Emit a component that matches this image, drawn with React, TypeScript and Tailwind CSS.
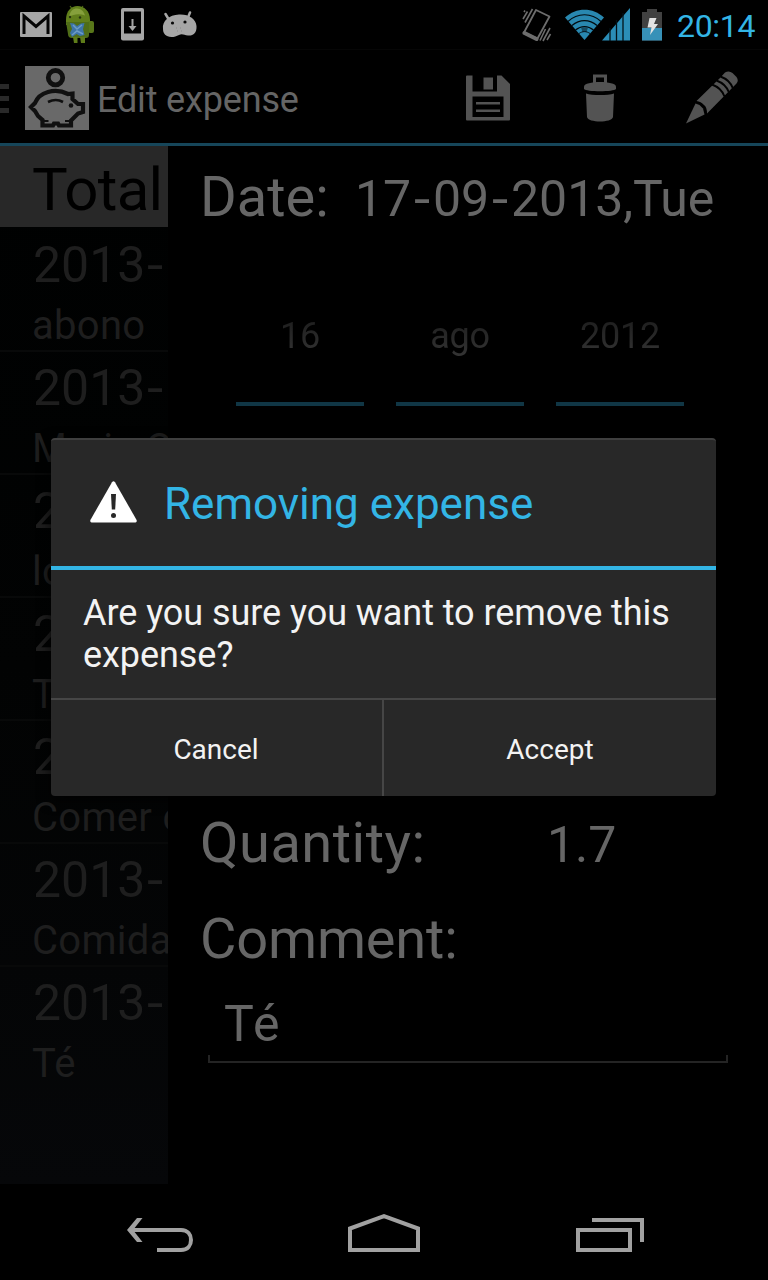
import React from "react";

const rows = [
  { year: "2013", note: "abono" },
  { year: "2013", note: "Maria C" },
  { year: "2013", note: "loteria" },
  { year: "2013", note: "Tabaco" },
  { year: "2013", note: "Comer con" },
  { year: "2013", note: "Comida" },
  { year: "2013", note: "Té" },
];

const pickers = ["16", "ago", "2012"];

function GmailIcon() {
  return (
    <svg className="ml-[20px] h-[25px] w-[32px] shrink-0" viewBox="0 0 32 25">
      <rect width="32" height="25" rx="1" fill="#a6a6a6" />
      <path d="M4 22V4L16 14.500L28 4V22" fill="none" stroke="#050505" strokeWidth="3" />
    </svg>
  );
}

function DroidIcon() {
  return (
    <svg className="ml-[13px] h-[39px] w-[30px] shrink-0" viewBox="0 0 30 39">
      <path d="M5 1l3 4M18 1l-3 4" stroke="#4f6a18" strokeWidth="1.2" />
      <path d="M1 15C1 6 6 1 12.500 1S25 6 25 15v5H1z" fill="#617f1b" />
      <path d="M4 12C5 6 8 3.500 12 3.500s7 3 8 7c-5-2-11-2-16 1.500z" fill="#86a03c" />
      <rect x="23" y="16" width="6" height="12" rx="2" fill="#587619" />
      <path d="M1 17h23v13q0 3-3 3H7q-4 0-4-4z" fill="#4f6d18" />
      <path d="M8 32h4.500v6H9zM15 32h5v6h-4z" fill="#5e7c19" />
      <circle cx="5" cy="12" r="1.200" fill="#25340f" />
      <circle cx="15" cy="12.500" r="1.200" fill="#25340f" />
      <path d="M5 18l4 .5 3 2.500 4-2.500 3.500-.5-1.500 6 1.500 6-4.500 1-3.500-2-4.500 3-2-4 2-4z" fill="#3d74a8" />
      <path d="M8 20l4 4 5-4M7 30l5-4 6 3" stroke="#6c9cc6" strokeWidth="1.500" fill="none" />
    </svg>
  );
}

function DownloadIcon() {
  return (
    <svg className="ml-[26px] h-[33px] w-[24px] shrink-0" viewBox="0 0 24 33">
      <rect x="0" y="0" width="23" height="32.500" rx="2" fill="#a6a6a6" />
      <rect x="3" y="3.500" width="17" height="22" fill="#020202" />
      <path d="M11.500 11v9" stroke="#a6a6a6" strokeWidth="2" />
      <path d="M7.500 18h8l-4 5z" fill="#a6a6a6" />
    </svg>
  );
}

function DroidHeadIcon() {
  return (
    <svg className="mb-[1px] ml-[17px] h-[27px] w-[36px] shrink-0" viewBox="0 0 36 27">
      <path
        d="M3.500 3l3 5M28 1.500l-2 5"
        stroke="#a6a6a6"
        strokeWidth="2.500"
        strokeLinecap="round"
      />
      <path
        d="M1 18C0 10 7 4 17 3.500S34 8 34.500 15C35 22 31 25 26 24.500 22 24 20 22 17 24 13 26 9 27 5 25 2 23.500 1 21 1 18z"
        fill="#a6a6a6"
      />
      <circle cx="10.500" cy="12" r="1.600" fill="#080808" />
      <circle cx="23" cy="11" r="1.600" fill="#080808" />
      <path d="M14 17h1M18 17h1M15 20h1M19 20h1" stroke="#8a8a8a" />
    </svg>
  );
}

function VibrateIcon() {
  return (
    <svg className="h-[36px] w-[30px] shrink-0" viewBox="0 0 30 36">
      <g fill="none" stroke="#6d6d6d">
        <path d="M14 3L27.500 9.500 15.500 31.500 2 25.500z" strokeWidth="1.800" strokeLinejoin="round" />
        <path d="M2.500 26L14.500 32" strokeWidth="4" strokeLinecap="round" />
        <path
          d="M10.500 2L3 15.500M5.500 4.500L1 12M3 3.500L2 5M28 21l-7 13M23.500 22l-5.500 11.500M28.500 27l-3.500 6"
          strokeWidth="1.600"
        />
      </g>
    </svg>
  );
}

function WifiIcon() {
  return (
    <svg className="ml-[13px] h-[32px] w-[40px] shrink-0" viewBox="0 0 40 32">
      <path d="M0 8.500C11-2 28-2 39 8.500L19.500 31z" fill="#2988b0" />
      <g fill="none" stroke="#020a0e" strokeWidth="1.200">
        <path d="M3 12.500c9.500-9 23.500-9 33 0" />
        <path d="M7 16.500c7.500-6.500 17.500-6.500 25 0" />
        <path d="M10.500 21c5.500-4.500 12.500-4.500 18 0" />
      </g>
      <path d="M16 18.500h7l-1.500 4.500h-4z" fill="#164c63" />
      <path d="M14 24.500c3.500-2.500 7.500-2.500 11 0" fill="none" stroke="#041017" />
    </svg>
  );
}

function SignalIcon() {
  return (
    <svg className="-ml-[3px] h-[33px] w-[29px] shrink-0" viewBox="0 0 29 33">
      <path d="M0 32.500L28 0V32.500z" fill="#2b8db7" />
      <path d="M8 20v13M14.500 12v21M21 5v28" stroke="#031118" strokeWidth="1.300" />
    </svg>
  );
}

function BatteryIcon() {
  return (
    <svg className="ml-[11px] h-[32px] w-[21px] shrink-0" viewBox="0 0 21 32">
      <path d="M5 0h10v3h5v28.500H0V3h5z" fill="#414141" />
      <path d="M0 19h20v12.500H0z" fill="#3791b8" />
      <path d="M7.500 9h7l-2.500 6h4L8 26l1.500-7.500H5.500z" fill="#e3e3e3" />
    </svg>
  );
}

function StatusBar() {
  return (
    <header className="flex h-[50px] shrink-0 items-center border-b border-[#060606] bg-black">
      <GmailIcon />
      <DroidIcon />
      <DownloadIcon />
      <DroidHeadIcon />
      <div className="ml-auto flex items-center pr-[11px]">
        <VibrateIcon />
        <WifiIcon />
        <SignalIcon />
        <BatteryIcon />
        <span className="ml-[14px] w-[80px] pt-[2px] text-[32px] leading-[48px] tracking-[-0.3px] whitespace-nowrap text-[#33b5e5]">
          20:14
        </span>
      </div>
    </header>
  );
}

function PiggyIcon() {
  return (
    <svg className="ml-[16px] size-[64px] shrink-0" viewBox="0 0 64 64">
      <rect width="64" height="64" fill="#696969" />
      <g fill="none" stroke="#101010">
        <circle cx="30.500" cy="11.700" r="7.200" strokeWidth="4.800" />
        <path
          d="M6 41L10 37C12 32 16 28 23 26 30 24 37 25 43 28L47.500 27.500V33L53 38H58V46L53 47.500 46 54.500V59.500H34L33 57.500H29L28 59.500H17.500V54L13 50 10 45z"
          strokeWidth="4.200"
        />
        <path d="M23 36q8-4 15 0" strokeWidth="2.600" />
        <path d="M17.500 55l6 0M40 55h6" strokeWidth="2" />
      </g>
      <circle cx="46" cy="39.500" r="2.300" fill="#101010" />
    </svg>
  );
}

function SaveIcon() {
  return (
    <svg className="h-[46px] w-[45px] shrink-0" viewBox="0 0 45 46">
      <path
        fill="#535353"
        fillRule="evenodd"
        d="M1 .5H6.500V16.500H31V.5H35.500L44 9V44.500Q44 45.500 43 45.500H1Q0 45.500 0 44.500V1.500Q0 .5 1 .5zM6.500 21.500V42H37.500V21.500z"
      />
      <path d="M17.500 2.500h9.500v12h-9.500zM10 27h24v2.600H10zM10 34.500h24v2.600H10z" fill="#535353" />
    </svg>
  );
}

function TrashIcon() {
  return (
    <svg className="h-[48px] w-[32px] shrink-0" viewBox="0 0 32 48">
      <path d="M10.500 9V2h11v7" fill="none" stroke="#535353" strokeWidth="3" />
      <path d="M0 12.500C0 6.500 32 6.500 32 12.500V15C30 18 2 18 0 15z" fill="#535353" />
      <path d="M2 19.500C8 21.500 24 21.500 30 19.500L29 43C28 49 4 49 3 43z" fill="#535353" />
    </svg>
  );
}

function PencilIcon() {
  return (
    <svg className="h-[53px] w-[53px] shrink-0" viewBox="0 0 53 53">
      <path
        d="M39 1.500Q43-.8 46.500 2L50.500 6Q53 9.500 50.500 12.500L21 42.500Q21 36 18 34 15 30.500 10.500 30L34 7z"
        fill="#535353"
      />
      <path d="M9.500 32.500L13.500 34 17 37.500 18.500 43.500 0 52.500z" fill="#535353" />
      <g stroke="#020202" strokeWidth="1.900" fill="none">
        <path d="M34.500 5.500q9.500 3.500 12.500 12" />
        <path d="M30.500 9.500q9.500 3.500 12.500 12" />
        <path d="M26 13.500q9.500 3.500 12.500 12" />
      </g>
    </svg>
  );
}

function ActionBar() {
  return (
    <div className="flex h-[96px] shrink-0 items-center border-b-[3px] border-[#16465a] bg-black pt-[2px]">
      <div className="flex w-[9px] flex-col gap-[7px] pt-[2px]">
        <i className="h-[5px] bg-[#292929]" />
        <i className="h-[5px] bg-[#292929]" />
        <i className="h-[5px] bg-[#292929]" />
      </div>
      <PiggyIcon />
      <h1 className="ml-[8px] w-[360px] pt-[4px] text-[36px] leading-[42px] tracking-[-0.16px] whitespace-nowrap text-[#656565]">
        Edit expense
      </h1>
      <div className="ml-[9px] flex flex-1 items-center">
        <SaveIcon />
        <div className="ml-[73px] flex">
          <TrashIcon />
        </div>
        <div className="ml-[70px] flex">
          <PencilIcon />
        </div>
      </div>
    </div>
  );
}

function Sidebar() {
  return (
    <aside className="w-[168px] shrink-0 overflow-hidden bg-linear-to-b from-[#000101] via-[#020303] to-[#060709]">
      <div className="mb-[2px] h-[81px] overflow-hidden bg-[#282828] pt-[3px] pl-[32px] text-[60px] leading-[81px] tracking-[-0.7px] whitespace-nowrap text-black">
        Total
      </div>
      {rows.map((row, i) => (
        <div
          key={i}
          className={
            "h-[123px] pt-[7px] pl-[33px] whitespace-nowrap text-[#1e1e1e] " +
            (i < rows.length - 1 ? "border-b-2 border-[#080909]" : "")
          }
        >
          <div className="text-[50px] leading-[59px]">
            {row.year}
            <span className="inline-block w-[20px] scale-x-[1.17] text-center">-</span>
          </div>
          <div className="-ml-[1px] pt-[6px] text-[40px] leading-[50px] tracking-[0.3px]">
            {row.note}
          </div>
        </div>
      ))}
    </aside>
  );
}

function DateDash() {
  return <span className="inline-block w-[22px] scale-x-[1.17] text-center">-</span>;
}

function ExpenseForm() {
  return (
    <main className="flex flex-1 flex-col bg-black text-[#666666]">
      <div className="flex h-[104px] items-baseline pt-[18px] pl-[32px] whitespace-nowrap">
        <span className="w-[155px] text-[56px] leading-[66px]">Date:</span>
        <span className="text-[50px] leading-[66px] tracking-[-0.08px]">
          17
          <DateDash />
          09
          <DateDash />
          2013,Tue
        </span>
      </div>
      <div className="flex gap-[32px] pl-[68px]">
        {pickers.map((value) => (
          <div
            key={value}
            className="h-[156px] w-[128px] border-b-4 border-[#103645] pt-[65px] text-center text-[36px] leading-[42px] tracking-[-0.2px]"
          >
            <span className="bg-linear-to-b from-[#1c1c1c] to-[#343434] bg-clip-text text-transparent">
              {value}
            </span>
          </div>
        ))}
      </div>
      <div className="mt-[404px] flex h-[66px] items-baseline pl-[32px] whitespace-nowrap">
        <span className="w-[347px] text-[56px] leading-[66px] tracking-[0.5px]">Quantity:</span>
        <span className="text-[50px] leading-[66px]">1.7</span>
      </div>
      <div className="mt-[30px] pl-[32px] text-[56px] leading-[66px] tracking-[-0.2px]">
        Comment:
      </div>
      <div className="mt-[22px] ml-[40px] w-[520px]">
        <div className="h-[61px] pl-[16px] text-[50px] leading-[60px] tracking-[1.5px]">Té</div>
        <div className="h-[8px] border-x-2 border-b-2 border-[#242424]" />
      </div>
    </main>
  );
}

function NavBar() {
  return (
    <nav className="flex h-[96px] shrink-0 bg-black pt-[30px] pl-[127px]">
      <svg className="h-[40px] w-[67px]" viewBox="0 0 67 40">
        <path d="M4 16H54C61 16 64 21 64 26S61 36 54 36H30" fill="none" stroke="#a1a1a1" strokeWidth="4" />
        <path d="M10 4H15.500L6 16 15.500 28H10L0 16z" fill="#a1a1a1" />
      </svg>
      <svg className="ml-[154px] h-[40px] w-[72px]" viewBox="0 0 72 40">
        <path d="M2 36V14.500L36 2.200L70 14.500V36z" fill="none" stroke="#a1a1a1" strokeWidth="4" />
      </svg>
      <svg className="ml-[156px] h-[40px] w-[68px]" viewBox="0 0 68 40">
        <g fill="none" stroke="#a1a1a1" strokeWidth="4">
          <path d="M2 16H54V36H2z" />
          <path d="M16 6H66V28" />
        </g>
      </svg>
    </nav>
  );
}

function Dialog() {
  return (
    <div
      role="alertdialog"
      className="absolute top-[438px] left-[51px] flex h-[358px] w-[665px] flex-col overflow-hidden rounded-[4px] border-t-2 border-[#3f3f3f] bg-[#282828] shadow-[0_4px_14px_rgba(0,0,0,0.8)]"
    >
      <div className="flex h-[130px] shrink-0 items-center border-b-4 border-[#33b5e5]">
        <svg className="mb-[2px] ml-[39px] h-[42px] w-[47px]" viewBox="0 0 47 42">
          <path
            d="M22 1.200Q23.500-.6 25 1.200L46.600 39Q47.200 41 45.500 41.500H1.500Q-.2 41 .4 39z"
            fill="#ffffff"
          />
          <path d="M21 13h5l-.8 15.500h-3.400z" fill="#282828" />
          <circle cx="23.500" cy="34.500" r="2.500" fill="#282828" />
        </svg>
        <h2 className="ml-[27px] pt-[2px] text-[44px] leading-[52px] whitespace-nowrap text-[#33b5e5]">
          Removing expense
        </h2>
      </div>
      <p className="h-[128px] shrink-0 pt-[22px] pl-[32px] text-[36px] leading-[42px] tracking-[-0.06px] whitespace-nowrap text-[#f3f3f3]">
        Are you sure you want to remove this
        <br />
        expense?
      </p>
      <div className="flex flex-1 border-t-2 border-[#464646] text-[28px] leading-[34px] text-[#f3f3f3]">
        <button className="w-[333px] border-r-2 border-[#464646] pt-[3px] pr-[1px]">Cancel</button>
        <button className="flex-1 pt-[3px]">Accept</button>
      </div>
    </div>
  );
}

export default function App() {
  return (
    <div className="relative flex h-[1280px] w-[768px] flex-col overflow-hidden bg-black font-[Roboto,'Liberation_Sans',sans-serif]">
      <StatusBar />
      <ActionBar />
      <div className="flex h-[1038px] shrink-0">
        <Sidebar />
        <ExpenseForm />
      </div>
      <NavBar />
      <Dialog />
    </div>
  );
}
